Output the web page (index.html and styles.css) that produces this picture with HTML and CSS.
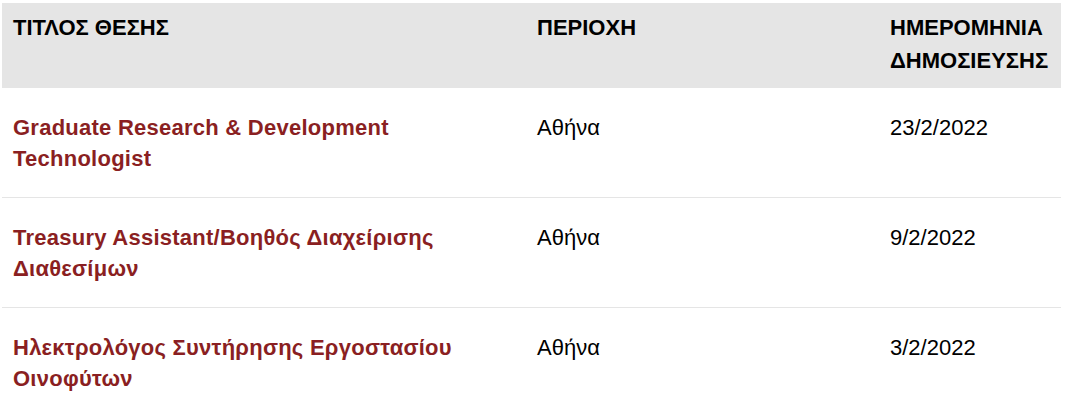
FILE: index.html
```html
<!DOCTYPE html>
<html lang="el">
<head>
<meta charset="utf-8">
<link rel="stylesheet" href="styles.css">
</head>
<body>
<table class="jobs">
  <thead>
    <tr>
      <th class="c-title">ΤΙΤΛΟΣ ΘΕΣΗΣ</th>
      <th class="c-area">ΠΕΡΙΟΧΗ</th>
      <th class="c-date">ΗΜΕΡΟΜΗΝΙΑ ΔΗΜΟΣΙΕΥΣΗΣ</th>
    </tr>
  </thead>
  <tbody>
    <tr>
      <td><a href="#">Graduate Research &amp; Development Technologist</a></td>
      <td>Αθήνα</td>
      <td>23/2/2022</td>
    </tr>
    <tr>
      <td><a href="#">Treasury Assistant/Βοηθός Διαχείρισης Διαθεσίμων</a></td>
      <td>Αθήνα</td>
      <td>9/2/2022</td>
    </tr>
    <tr>
      <td><a href="#">Ηλεκτρολόγος Συντήρησης Εργοστασίου Οινοφύτων</a></td>
      <td>Αθήνα</td>
      <td>3/2/2022</td>
    </tr>
  </tbody>
</table>
</body>
</html>
```
FILE: styles.css
```css
body {
  margin: 3px 0 0 2px;
  font-family: "Liberation Sans", Arial, sans-serif;
  background: #fff;
  color: #000;
}
.jobs {
  width: 1059px;
  table-layout: fixed;
  border-collapse: collapse;
  font-size: 22px;
  line-height: 31px;
}
.jobs thead tr {
  background: #e5e5e5;
}
.jobs th {
  text-align: left;
  font-weight: bold;
  vertical-align: top;
  padding: 8px 11px 11px;
  line-height: 33px;
}
.c-title { width: 502px; }
.c-area { width: 331px; }
.jobs td {
  vertical-align: top;
  padding: 24px 11px 23px;
  border-bottom: 1px solid #e5e5e5;
}
.jobs tbody tr:last-child td { border-bottom: none; }
.jobs a {
  color: #8a1f22;
  font-weight: bold;
  letter-spacing: 0.25px;
  text-decoration: none;
}
```
